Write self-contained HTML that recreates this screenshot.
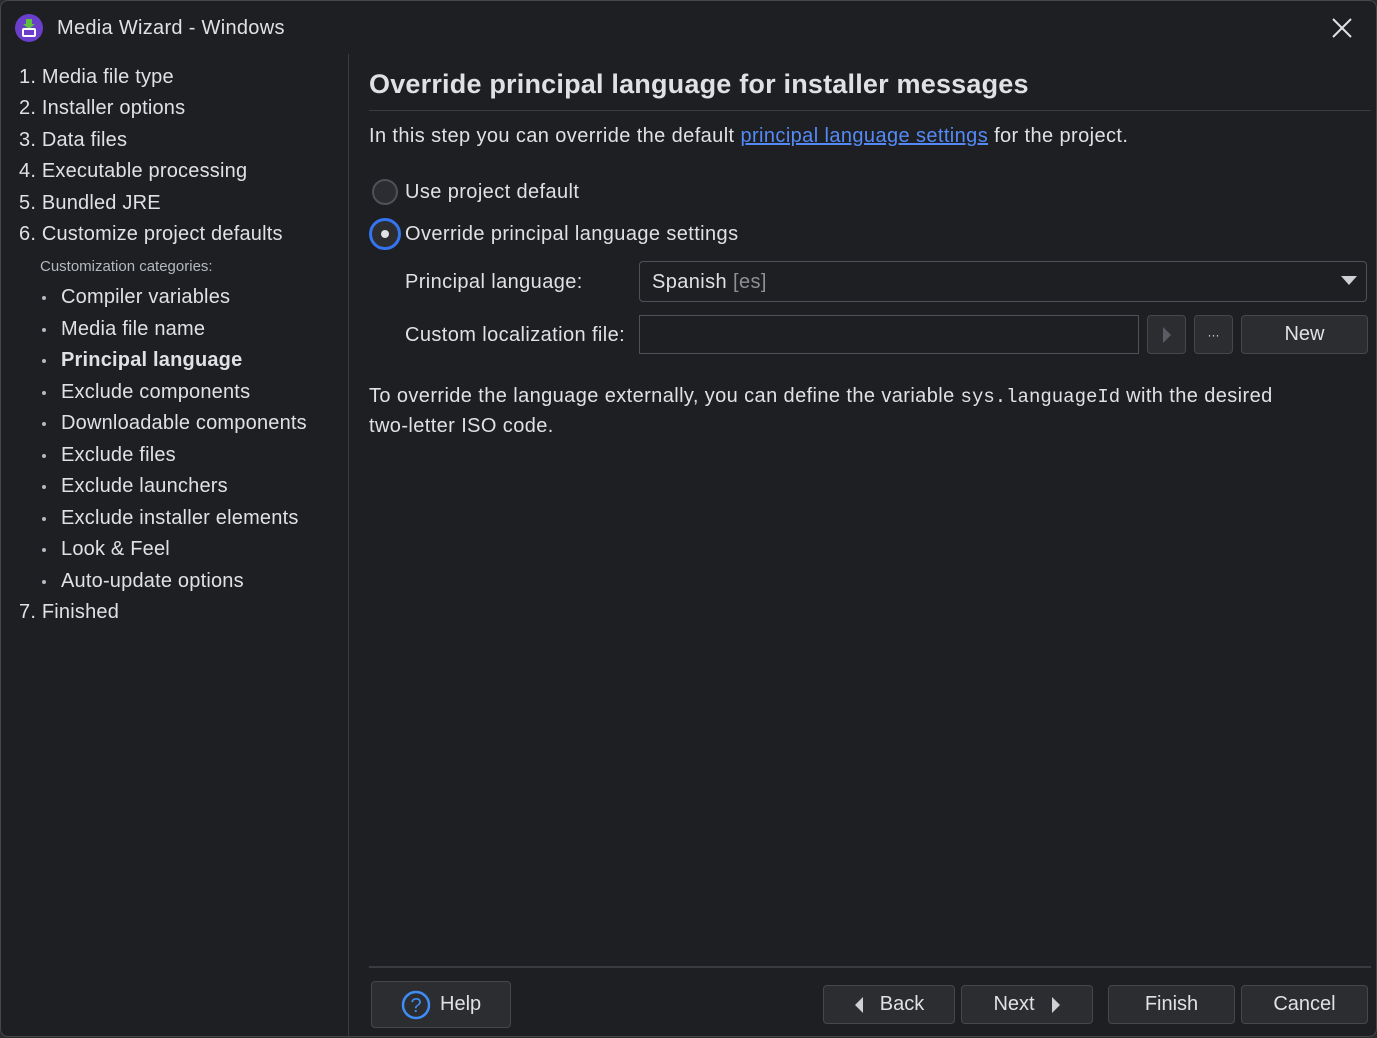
<!DOCTYPE html>
<html><head><style>
*{margin:0;padding:0;box-sizing:border-box}
body{width:1377px;height:1037px;background:#2b2d30;font-family:"Liberation Sans",sans-serif;color:#dfe1e5;overflow:hidden;position:relative}
.win{position:absolute;left:0;top:0;width:1377px;height:1037px;background:#1e1f22;border:1px solid #45474a;border-radius:8px}
.t{position:absolute;white-space:nowrap}
.nav{font-size:20px;color:#dfe1e5;letter-spacing:0.2px}
.sub{position:absolute;left:60px;font-size:20px;white-space:nowrap;letter-spacing:0.2px}
.sub::before{content:"";position:absolute;left:-19px;top:10px;width:4px;height:4px;border-radius:50%;background:#b4b8bf}
.btn{position:absolute;background:#2b2d30;border:1px solid #45474a;border-radius:4px;font-size:20px;color:#dfe1e5;display:flex;align-items:center;justify-content:center}
.b{letter-spacing:0.4px}
</style></head><body>
<div class="win">
<svg style="position:absolute;left:14px;top:13px" width="28" height="28" viewBox="0 0 28 28"><circle cx="14" cy="14" r="14" fill="#6a3fc9"/><rect x="11" y="5" width="6" height="5" fill="#5fbf3f"/><path d="M8 10h12l-6 5z" fill="#5fbf3f"/><rect x="8" y="15" width="12" height="7" rx="1" fill="none" stroke="#fff" stroke-width="2"/></svg>
<div class="t" style="left:56px;top:16px;font-size:20px;letter-spacing:0.3px">Media Wizard - Windows</div>
<svg style="position:absolute;left:1331px;top:17px" width="20" height="20"><path d="M1 1L19 19M19 1L1 19" stroke="#dfe1e5" stroke-width="2"/></svg>
<div style="position:absolute;left:347px;top:53px;width:1px;height:984px;background:#393b40"></div>

<div class="t nav" style="left:18px;top:65px">1. Media file type</div>
<div class="t nav" style="left:18px;top:96px">2. Installer options</div>
<div class="t nav" style="left:18px;top:128px">3. Data files</div>
<div class="t nav" style="left:18px;top:159px">4. Executable processing</div>
<div class="t nav" style="left:18px;top:191px">5. Bundled JRE</div>
<div class="t nav" style="left:18px;top:222px">6. Customize project defaults</div>
<div class="t" style="left:39px;top:257px;font-size:15px;color:#b4b8bf">Customization categories:</div>
<div class="sub" style="top:285px">Compiler variables</div>
<div class="sub" style="top:317px">Media file name</div>
<div class="sub" style="top:348px"><b>Principal language</b></div>
<div class="sub" style="top:380px">Exclude components</div>
<div class="sub" style="top:411px">Downloadable components</div>
<div class="sub" style="top:443px">Exclude files</div>
<div class="sub" style="top:474px">Exclude launchers</div>
<div class="sub" style="top:506px">Exclude installer elements</div>
<div class="sub" style="top:537px">Look &amp; Feel</div>
<div class="sub" style="top:569px">Auto-update options</div>
<div class="t nav" style="left:18px;top:600px">7. Finished</div>

<div class="t" style="left:368px;top:68px;font-size:27px;font-weight:bold;letter-spacing:0.2px">Override principal language for installer messages</div>
<div style="position:absolute;left:368px;top:109px;width:1002px;height:1px;background:#393b40"></div>
<div class="t b" style="left:368px;top:124px;font-size:20px">In this step you can override the default <span style="color:#548af7;text-decoration:underline">principal language settings</span> for the project.</div>

<div style="position:absolute;left:371px;top:178px;width:26px;height:26px;border-radius:50%;border:2px solid #4e5157;background:#2b2d30"></div>
<div class="t b" style="left:404px;top:180px;font-size:20px">Use project default</div>
<div style="position:absolute;left:368px;top:217px;width:32px;height:32px;border-radius:50%;border:3px solid #3574f0;background:#2b2d30"></div>
<div style="position:absolute;left:380px;top:229px;width:8px;height:8px;border-radius:50%;background:#dfe1e5"></div>
<div class="t b" style="left:404px;top:222px;font-size:20px">Override principal language settings</div>

<div class="t b" style="left:404px;top:270px;font-size:20px">Principal language:</div>
<div style="position:absolute;left:638px;top:260px;width:728px;height:41px;border:1px solid #4e5157;border-radius:4px;background:#1e1f22"></div>
<div class="t b" style="left:651px;top:270px;font-size:20px">Spanish <span style="color:#8c8f94">[es]</span></div>
<svg style="position:absolute;left:1340px;top:275px" width="16" height="10"><path d="M0 0H16L8 9z" fill="#ced0d6"/></svg>

<div class="t b" style="left:404px;top:323px;font-size:20px">Custom localization file:</div>
<div style="position:absolute;left:638px;top:314px;width:500px;height:39px;border:1px solid #4e5157;background:#1e1f22"></div>
<div class="btn" style="left:1146px;top:314px;width:39px;height:39px"><svg width="10" height="16"><path d="M1 0V16L9 8z" fill="#5a5d63"/></svg></div>
<div class="btn" style="left:1193px;top:314px;width:39px;height:39px;font-size:12px">···</div>
<div class="btn" style="left:1240px;top:314px;width:127px;height:39px">New</div>

<div class="t b" style="left:368px;top:384px;font-size:20px">To override the language externally, you can define the variable <span style="font-family:'Liberation Mono',monospace;font-size:19px;letter-spacing:0">sys.languageId</span> with the desired</div>
<div class="t b" style="left:368px;top:414px;font-size:20px">two-letter ISO code.</div>

<div style="position:absolute;left:368px;top:965px;width:1002px;height:2px;background:#393b40"></div>
<div class="btn" style="left:370px;top:980px;width:140px;height:47px;justify-content:flex-start;padding-left:29px"><svg width="30" height="30" style="margin-right:9px"><circle cx="15" cy="15" r="13" fill="none" stroke="#3f8cf5" stroke-width="2.5"/><text x="15" y="22" text-anchor="middle" font-size="20" fill="#3f8cf5" font-family="Liberation Sans">?</text></svg>Help</div>
<div class="btn" style="left:822px;top:984px;width:132px;height:39px"><svg width="10" height="16" style="margin-right:16px"><path d="M9 0V16L1 8z" fill="#ced0d6"/></svg>Back</div>
<div class="btn" style="left:960px;top:984px;width:132px;height:39px">Next<svg width="10" height="16" style="margin-left:16px"><path d="M1 0V16L9 8z" fill="#ced0d6"/></svg></div>
<div class="btn" style="left:1107px;top:984px;width:127px;height:39px">Finish</div>
<div class="btn" style="left:1240px;top:984px;width:127px;height:39px">Cancel</div>
</div>
</body></html>
